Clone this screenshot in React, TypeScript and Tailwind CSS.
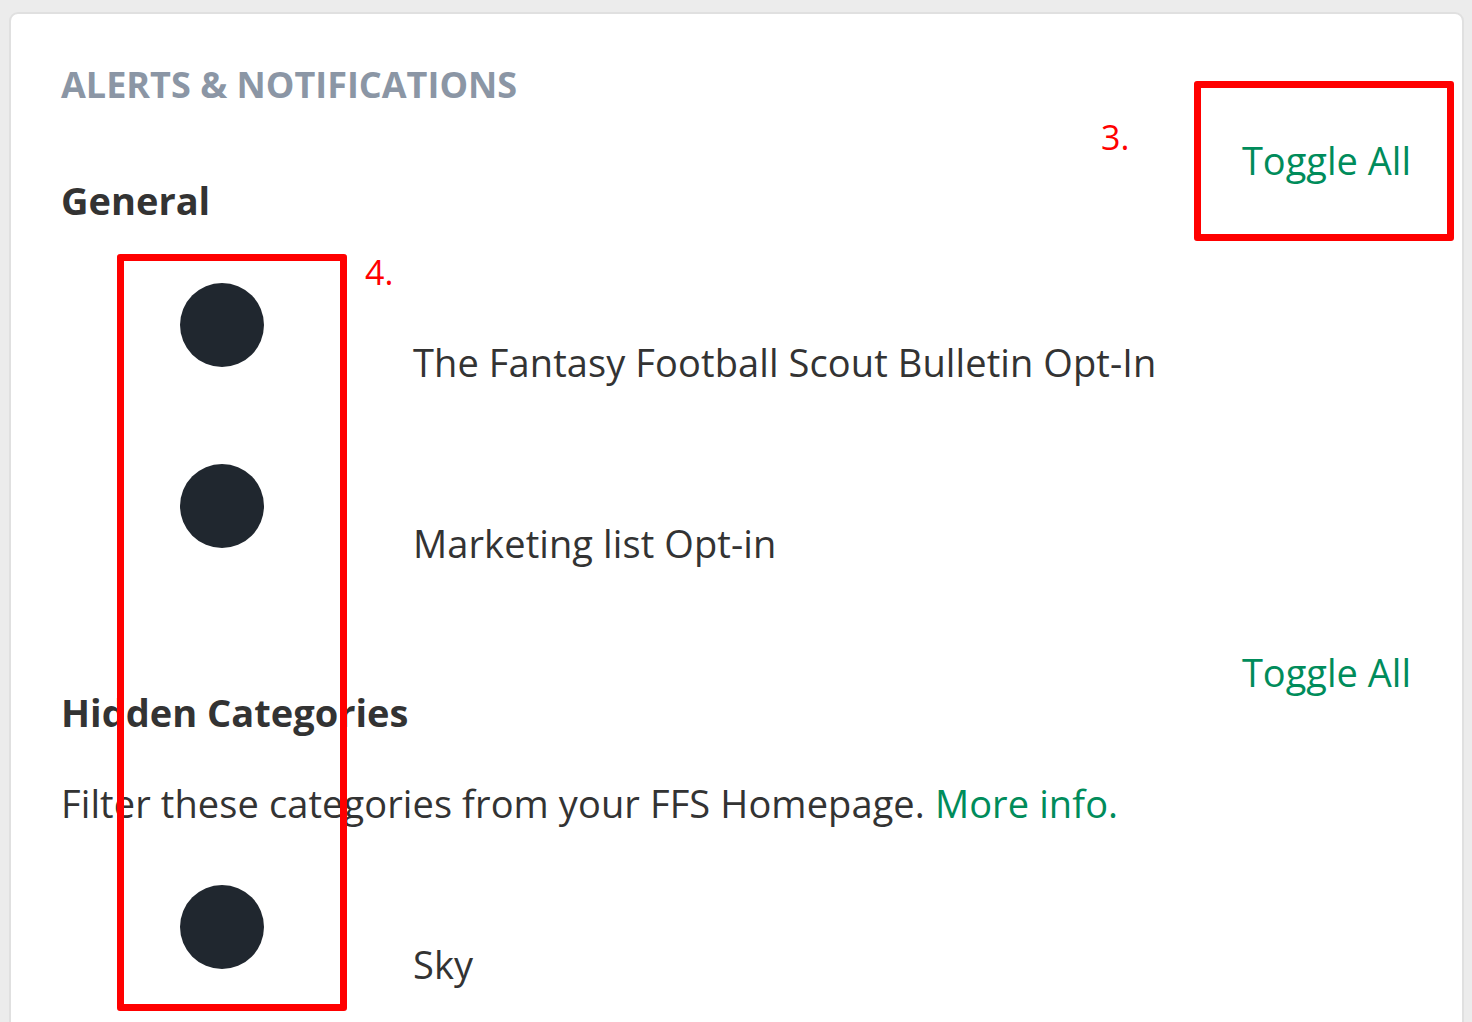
const font = { fontFamily: '"Open Sans", "Liberation Sans", sans-serif' };

function SectionHeader({ title }: { title: string }) {
    return (
        <div className="flex justify-between items-start">
            <h3 className="pt-[40px] text-[38px] leading-[54px] font-bold text-[#333333]">{title}</h3>
            <button className="text-[38px] leading-[54px] text-[#008c5b]">Toggle All</button>
        </div>
    );
}

function OptionRow({ label, className }: { label: string; className?: string }) {
    return (
        <div className={'flex items-start h-[181px] ' + (className ?? '')}>
            <div className="w-[352px] shrink-0 pl-[119px]">
                <div className="w-[84px] h-[84px] rounded-full bg-[#20272f]" />
            </div>
            <div className="pt-[52px] text-[38px] leading-[54px] tracking-[0.1px] text-[#333333]">{label}</div>
        </div>
    );
}

export default function App() {
    return (
        <div className="min-h-screen bg-[#ececec] pt-[12px] pl-[9px] pr-[8px]" style={font}>
            <div className="relative bg-white border-2 border-[#e0e0e0] rounded-[9px] pl-[50px] pr-[51px] pt-[53px] pb-[80px]">
                <h2 className="text-[36px] leading-[36px] font-bold uppercase text-[#8b96a5]">Alerts &amp; Notifications</h2>

                <div className="mt-[30px]">
                    <SectionHeader title="General" />
                </div>
                <OptionRow className="mt-[56px]" label="The Fantasy Football Scout Bulletin Opt-In" />
                <OptionRow label="Marketing list Opt-in" />

                <SectionHeader title="Hidden Categories" />
                <p className="mt-[37px] text-[38px] leading-[54px] tracking-[0.1px] text-[#333333]">
                    Filter these categories from your FFS Homepage. <a className="text-[#008c5b]">More info.</a>
                </p>
                <OptionRow className="mt-[55px]" label="Sky" />

                {/* annotations */}
                <div className="absolute left-[1183px] top-[67px] w-[260px] h-[160px] border-[7px] border-[#ff0000] rounded-[3px]" />
                <div className="absolute left-[106px] top-[240px] w-[230px] h-[757px] border-[7px] border-[#ff0000] rounded-[3px]" />
                <span className="absolute left-[1090px] top-[106px] text-[34px] leading-none text-[#ff0000]">3.</span>
                <span className="absolute left-[354px] top-[241px] text-[34px] leading-none text-[#ff0000]">4.</span>
            </div>
        </div>
    );
}
